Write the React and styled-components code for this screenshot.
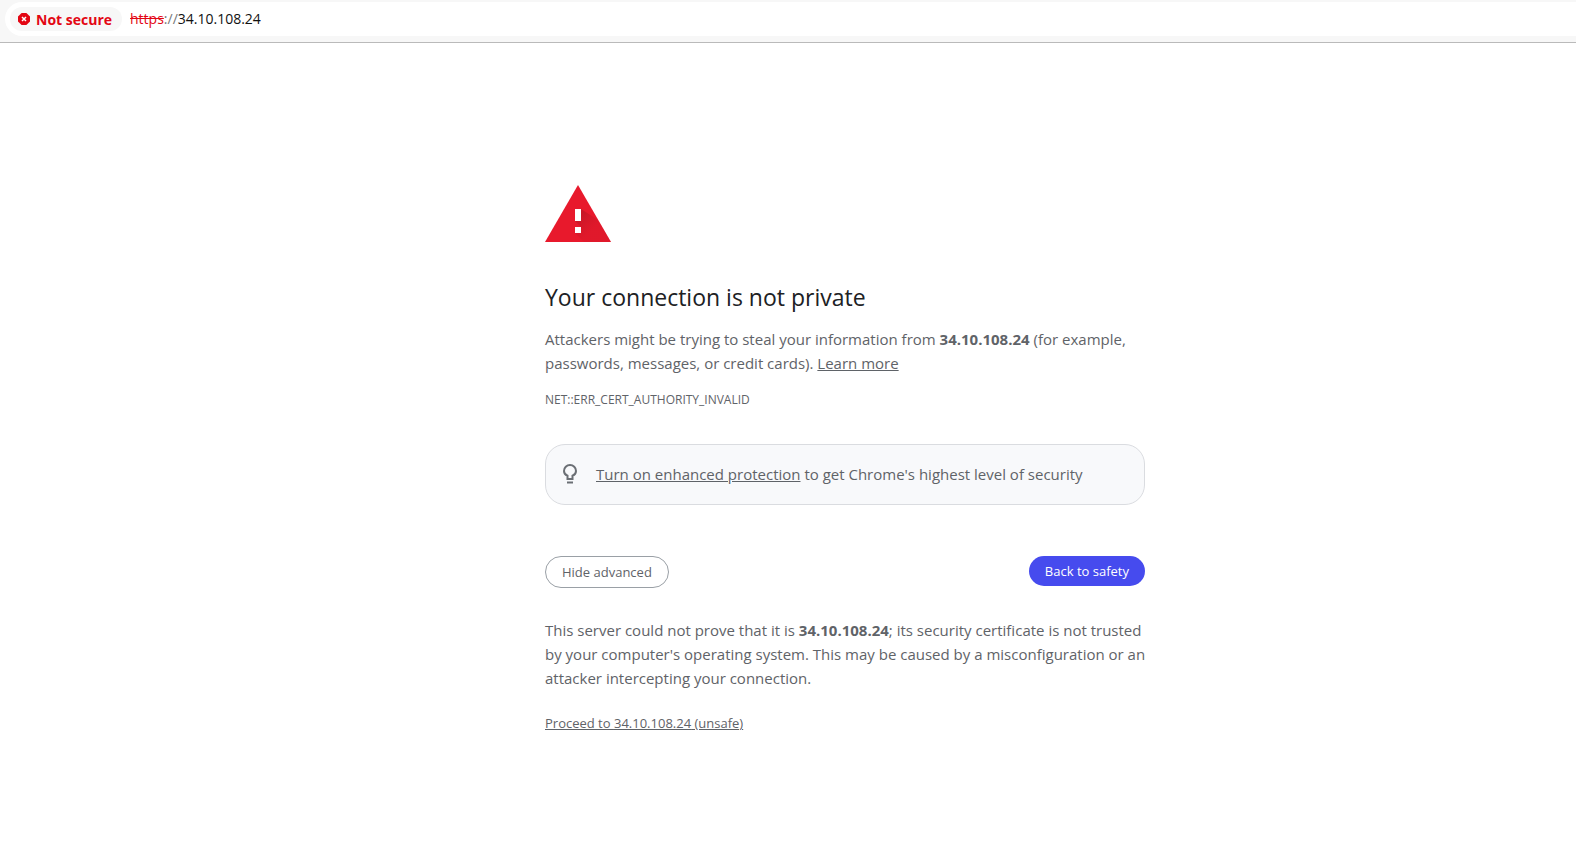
import React, { useState } from "react";
import styled, { createGlobalStyle } from "styled-components";

const HOST = "34.10.108.24";

const GlobalStyle = createGlobalStyle`
  body {
    margin: 0;
    background: #fff;
    color: #5f6368;
    font-family: "Open Sans", "Noto Sans", sans-serif;
    font-size: 15px;
    line-height: 24px;
  }
`;

const Toolbar = styled.header`
  padding: 2px 0 6px 5px;
  background: #f7f7f7;
  border-bottom: 1px solid #bababa;
`;

const AddressBar = styled.div`
  display: flex;
  align-items: center;
  gap: 8px;
  padding: 5px;
  background: #fff;
  border-radius: 17px 0 0 17px;
`;

const SecurityChip = styled.button`
  display: flex;
  align-items: center;
  gap: 6px;
  height: 24px;
  padding: 0 10px 0 8px;
  border: none;
  border-radius: 12px;
  background: #f7f7f7;
  color: #e30613;
  font-family: inherit;
  font-size: 14px;
  font-weight: 700;
  cursor: pointer;
`;

const Url = styled.div`
  color: #111;
  font-size: 14px;
`;

const Scheme = styled.s`
  color: #e30613;
`;

const Slashes = styled.span`
  color: #777;
`;

const Page = styled.main`
  padding: 142px 0 40px 114px;
`;

const Content = styled.div`
  max-width: 600px;
  margin: 0 auto;
`;

const WarningIcon = styled.svg`
  display: block;
  margin-bottom: 40px;
`;

const Title = styled.h1`
  margin: 0 0 15px;
  color: #202124;
  font-size: 23px;
  font-weight: 400;
  line-height: 30px;
`;

const Text = styled.p`
  margin: 0;
`;

const Details = styled(Text)`
  margin-right: -4px;
`;

const ErrorCode = styled.div`
  margin: 13px 0 32px;
  font-size: 12px;
`;

const TextLink = styled.a`
  color: inherit;
  font-size: ${({ $small }) => ($small ? "13px" : "inherit")};
  text-decoration: underline;
`;

const Tip = styled.div`
  display: flex;
  align-items: center;
  gap: 17px;
  padding: 17px 15px 18px;
  border: 1px solid #dadce0;
  border-radius: 20px;
  background: #f8f9fb;
`;

const Actions = styled.div`
  display: flex;
  align-items: flex-start;
  justify-content: space-between;
  margin: 51px 0 30px;
`;

const Button = styled.button`
  padding: 0 16px;
  border: ${({ $primary }) => ($primary ? "none" : "1px solid #9aa0a6")};
  border-radius: 16px;
  background: ${({ $primary }) => ($primary ? "#464bee" : "#fff")};
  color: ${({ $primary }) => ($primary ? "#fff" : "#5f6368")};
  font-family: inherit;
  font-size: 13px;
  line-height: 30px;
  cursor: pointer;
`;

const Proceed = styled.p`
  margin: 20px 0 0;
`;

const App = () => {
  const [showAdvanced, setShowAdvanced] = useState(true);

  return (
    <>
      <GlobalStyle />
      <Toolbar>
        <AddressBar>
          <SecurityChip type="button">
            <svg width="12" height="12" viewBox="0 0 12 12" aria-hidden="true">
              <path d="M3.6 0h4.8L12 3.6v4.8L8.4 12H3.6L0 8.4V3.6z" fill="#e30613" />
              <path d="M4 4l4 4M8 4l-4 4" stroke="#fff" strokeWidth="1.5" />
            </svg>
            Not secure
          </SecurityChip>
          <Url>
            <Scheme>https</Scheme>
            <Slashes>://</Slashes>
            {HOST}
          </Url>
        </AddressBar>
      </Toolbar>
      <Page>
        <Content>
          <WarningIcon width="66" height="57" viewBox="0 0 66 57" aria-hidden="true">
            <defs>
              <linearGradient id="shade" gradientUnits="userSpaceOnUse" x1="33" y1="33" x2="46" y2="46">
                <stop offset="0" stopColor="#a81522" stopOpacity="0.5" />
                <stop offset="1" stopColor="#c81828" stopOpacity="0.25" />
              </linearGradient>
            </defs>
            <path d="M33 0l33 57H0z" fill="#e8192c" />
            <path d="M36 24l17 11 13 22H39l-9-9 6-6-6-6h6z" fill="url(#shade)" />
            <path d="M30 24h6v12h-6zM30 42h6v6h-6z" fill="#fff" />
          </WarningIcon>
          <Title>Your connection is not private</Title>
          <Text>
            Attackers might be trying to steal your information from <strong>{HOST}</strong> (for example,
            passwords, messages, or credit cards). <TextLink href="#learn-more">Learn more</TextLink>
          </Text>
          <ErrorCode>NET::ERR_CERT_AUTHORITY_INVALID</ErrorCode>
          <Tip>
            <svg width="18" height="20" viewBox="0 0 18 20" fill="none" stroke="#6b6f74" strokeWidth="2" aria-hidden="true">
              <path d="M6.5 15v-3.3C4.3 10.8 3 9 3 7a6 6 0 0 1 12 0c0 2-1.3 3.8-3.5 4.7V15z" />
              <path d="M6 18.5h6" />
            </svg>
            <Text>
              <TextLink href="#enhanced-protection">Turn on enhanced protection</TextLink> to get Chrome's highest
              level of security
            </Text>
          </Tip>
          <Actions>
            <Button type="button" onClick={() => setShowAdvanced(!showAdvanced)}>
              {showAdvanced ? "Hide advanced" : "Advanced"}
            </Button>
            <Button type="button" $primary>
              Back to safety
            </Button>
          </Actions>
          {showAdvanced && (
            <>
              <Details>
                This server could not prove that it is <strong>{HOST}</strong>; its security certificate is not
                trusted by your computer's operating system. This may be caused by a misconfiguration or an attacker
                intercepting your connection.
              </Details>
              <Proceed>
                <TextLink href="#proceed" $small>
                  Proceed to {HOST} (unsafe)
                </TextLink>
              </Proceed>
            </>
          )}
        </Content>
      </Page>
    </>
  );
};

export default App;
